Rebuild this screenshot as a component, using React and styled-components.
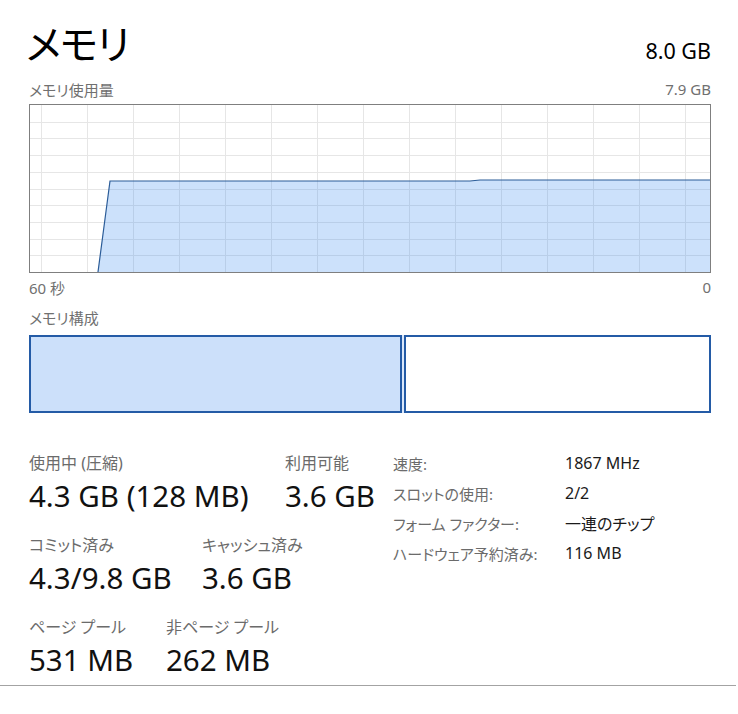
import { Fragment } from "react";
import styled, { createGlobalStyle } from "styled-components";

const GlobalStyle = createGlobalStyle`
  html, body {
    margin: 0;
    padding: 0;
    background: #ffffff;
  }
  body {
    font-family: "Noto Sans", "Noto Sans CJK JP", sans-serif;
    font-feature-settings: "palt";
    color: #000;
  }
`;

const Page = styled.div`
  width: 738px;
  height: 714px;
  box-sizing: border-box;
  padding-top: 16px;
  overflow: hidden;
`;

const Inner = styled.div`
  padding: 0 27px 0 29px;
`;

const Header = styled.div`
  display: flex;
  justify-content: space-between;
  align-items: baseline;
  height: 52px;
  margin-left: -3px;
`;

const Title = styled.h1`
  margin: 0;
  font-family: "Noto Sans CJK JP", sans-serif;
  font-weight: 400;
  font-size: 40px;
  line-height: 52px;
  letter-spacing: -1px;
`;

const Total = styled.div`
  font-size: 21.5px;
  line-height: 52px;
`;

const LabelRow = styled.div`
  display: flex;
  justify-content: space-between;
  align-items: center;
  height: 20px;
  margin-top: ${(p) => p.$top || 0}px;
  font-size: 15px;
  color: #707070;
`;

const GraphBox = styled.div`
  width: 682px;
  height: 169px;
  margin-top: 5px;
  box-sizing: border-box;
  border: 1px solid #7f7f7f;
  background: #fff;
`;

const CompBar = styled.div`
  display: flex;
  width: 682px;
  height: 78px;
  margin-top: 8px;
`;

const Segment = styled.div`
  box-sizing: border-box;
  flex: ${(p) => (p.$width ? `0 0 ${p.$width}px` : "1 1 auto")};
  border: ${(p) => (p.$border ? "2px solid #245ba6" : "none")};
  background: ${(p) => p.$fill || "#fff"};
`;

const Stats = styled.div`
  display: grid;
  grid-template-columns: 364px 1fr;
  margin-top: 40px;
`;

const StatRows = styled.div`
  display: flex;
  flex-direction: column;
  gap: 22px;
`;

const StatRow = styled.div`
  display: flex;
`;

const Stat = styled.div`
  display: flex;
  flex-direction: column;
  gap: 6px;
  width: ${(p) => (p.$width ? `${p.$width}px` : "auto")};
  flex-shrink: 0;
`;

const StatLabel = styled.div`
  font-size: 16px;
  line-height: 20px;
  color: #6b6b6b;
  white-space: nowrap;
`;

const StatValue = styled.div`
  font-size: 29.5px;
  line-height: 34px;
  color: #111;
  white-space: nowrap;
`;

const Details = styled.div`
  display: grid;
  grid-template-columns: 172px 1fr;
  grid-auto-rows: 30px;
  align-items: center;
  margin-top: -5px;
`;

const DetailKey = styled.div`
  font-size: 15px;
  color: #6b6b6b;
  white-space: nowrap;
`;

const DetailValue = styled.div`
  font-size: 16px;
  color: #1a1a1a;
  white-space: nowrap;
`;

const Divider = styled.div`
  height: 1px;
  margin-top: 8px;
  width: 736px;
  background: #a3a3a3;
`;

const W = 680;
const H = 167;

function UsageChart() {
  const vLines = [];
  for (let x = 11; x < W; x += 46) vLines.push(x);
  const hLines = [];
  for (let i = 1; i < 10; i++) hLines.push(Math.round((H / 10) * i) + 0.5);
  const pts = [
    [68, H],
    [80, 76],
    [440, 76],
    [450, 75],
    [W, 75],
  ];
  const line = pts.map((p) => p.join(",")).join(" ");
  const area = `${line} ${W},${H}`;
  return (
    <svg width={W} height={H} style={{ display: "block" }}>
      {vLines.map((x) => (
        <line key={`v${x}`} x1={x + 0.5} y1={0} x2={x + 0.5} y2={H} stroke="#e6e6e6" strokeWidth="1" />
      ))}
      {hLines.map((y) => (
        <line key={`h${y}`} x1={0} y1={y} x2={W} y2={y} stroke="#e6e6e6" strokeWidth="1" />
      ))}
      <polygon points={area} fill="rgba(40,130,240,0.24)" />
      <polyline points={line} fill="none" stroke="#2b5c98" strokeWidth="1.2" />
    </svg>
  );
}

const details = [
  ["速度:", "1867 MHz"],
  ["スロットの使用:", "2/2"],
  ["フォーム ファクター:", "一連のチップ"],
  ["ハードウェア予約済み:", "116 MB"],
];

export default function App() {
  return (
    <>
      <GlobalStyle />
      <Page>
        <Inner>
          <Header>
            <Title>メモリ</Title>
            <Total>8.0 GB</Total>
          </Header>
          <LabelRow $top={11}>
            <span>メモリ使用量</span>
            <span>7.9 GB</span>
          </LabelRow>
          <GraphBox>
            <UsageChart />
          </GraphBox>
          <LabelRow $top={4}>
            <span>60 秒</span>
            <span>0</span>
          </LabelRow>
          <LabelRow $top={10}>
            <span>メモリ構成</span>
          </LabelRow>
          <CompBar>
            <Segment $width={373} $border $fill="#cce0fa" />
            <Segment $width={2} $fill="#dbe8fb" />
            <Segment $border />
          </CompBar>
          <Stats>
            <StatRows>
              <StatRow>
                <Stat $width={256}>
                  <StatLabel>使用中 (圧縮)</StatLabel>
                  <StatValue>4.3 GB (128 MB)</StatValue>
                </Stat>
                <Stat>
                  <StatLabel>利用可能</StatLabel>
                  <StatValue>3.6 GB</StatValue>
                </Stat>
              </StatRow>
              <StatRow>
                <Stat $width={173}>
                  <StatLabel>コミット済み</StatLabel>
                  <StatValue>4.3/9.8 GB</StatValue>
                </Stat>
                <Stat>
                  <StatLabel>キャッシュ済み</StatLabel>
                  <StatValue>3.6 GB</StatValue>
                </Stat>
              </StatRow>
              <StatRow>
                <Stat $width={137}>
                  <StatLabel>ページ プール</StatLabel>
                  <StatValue>531 MB</StatValue>
                </Stat>
                <Stat>
                  <StatLabel>非ページ プール</StatLabel>
                  <StatValue>262 MB</StatValue>
                </Stat>
              </StatRow>
            </StatRows>
            <Details>
              {details.map(([k, v]) => (
                <Fragment key={k}>
                  <DetailKey>{k}</DetailKey>
                  <DetailValue>{v}</DetailValue>
                </Fragment>
              ))}
            </Details>
          </Stats>
        </Inner>
        <Divider />
      </Page>
    </>
  );
}
